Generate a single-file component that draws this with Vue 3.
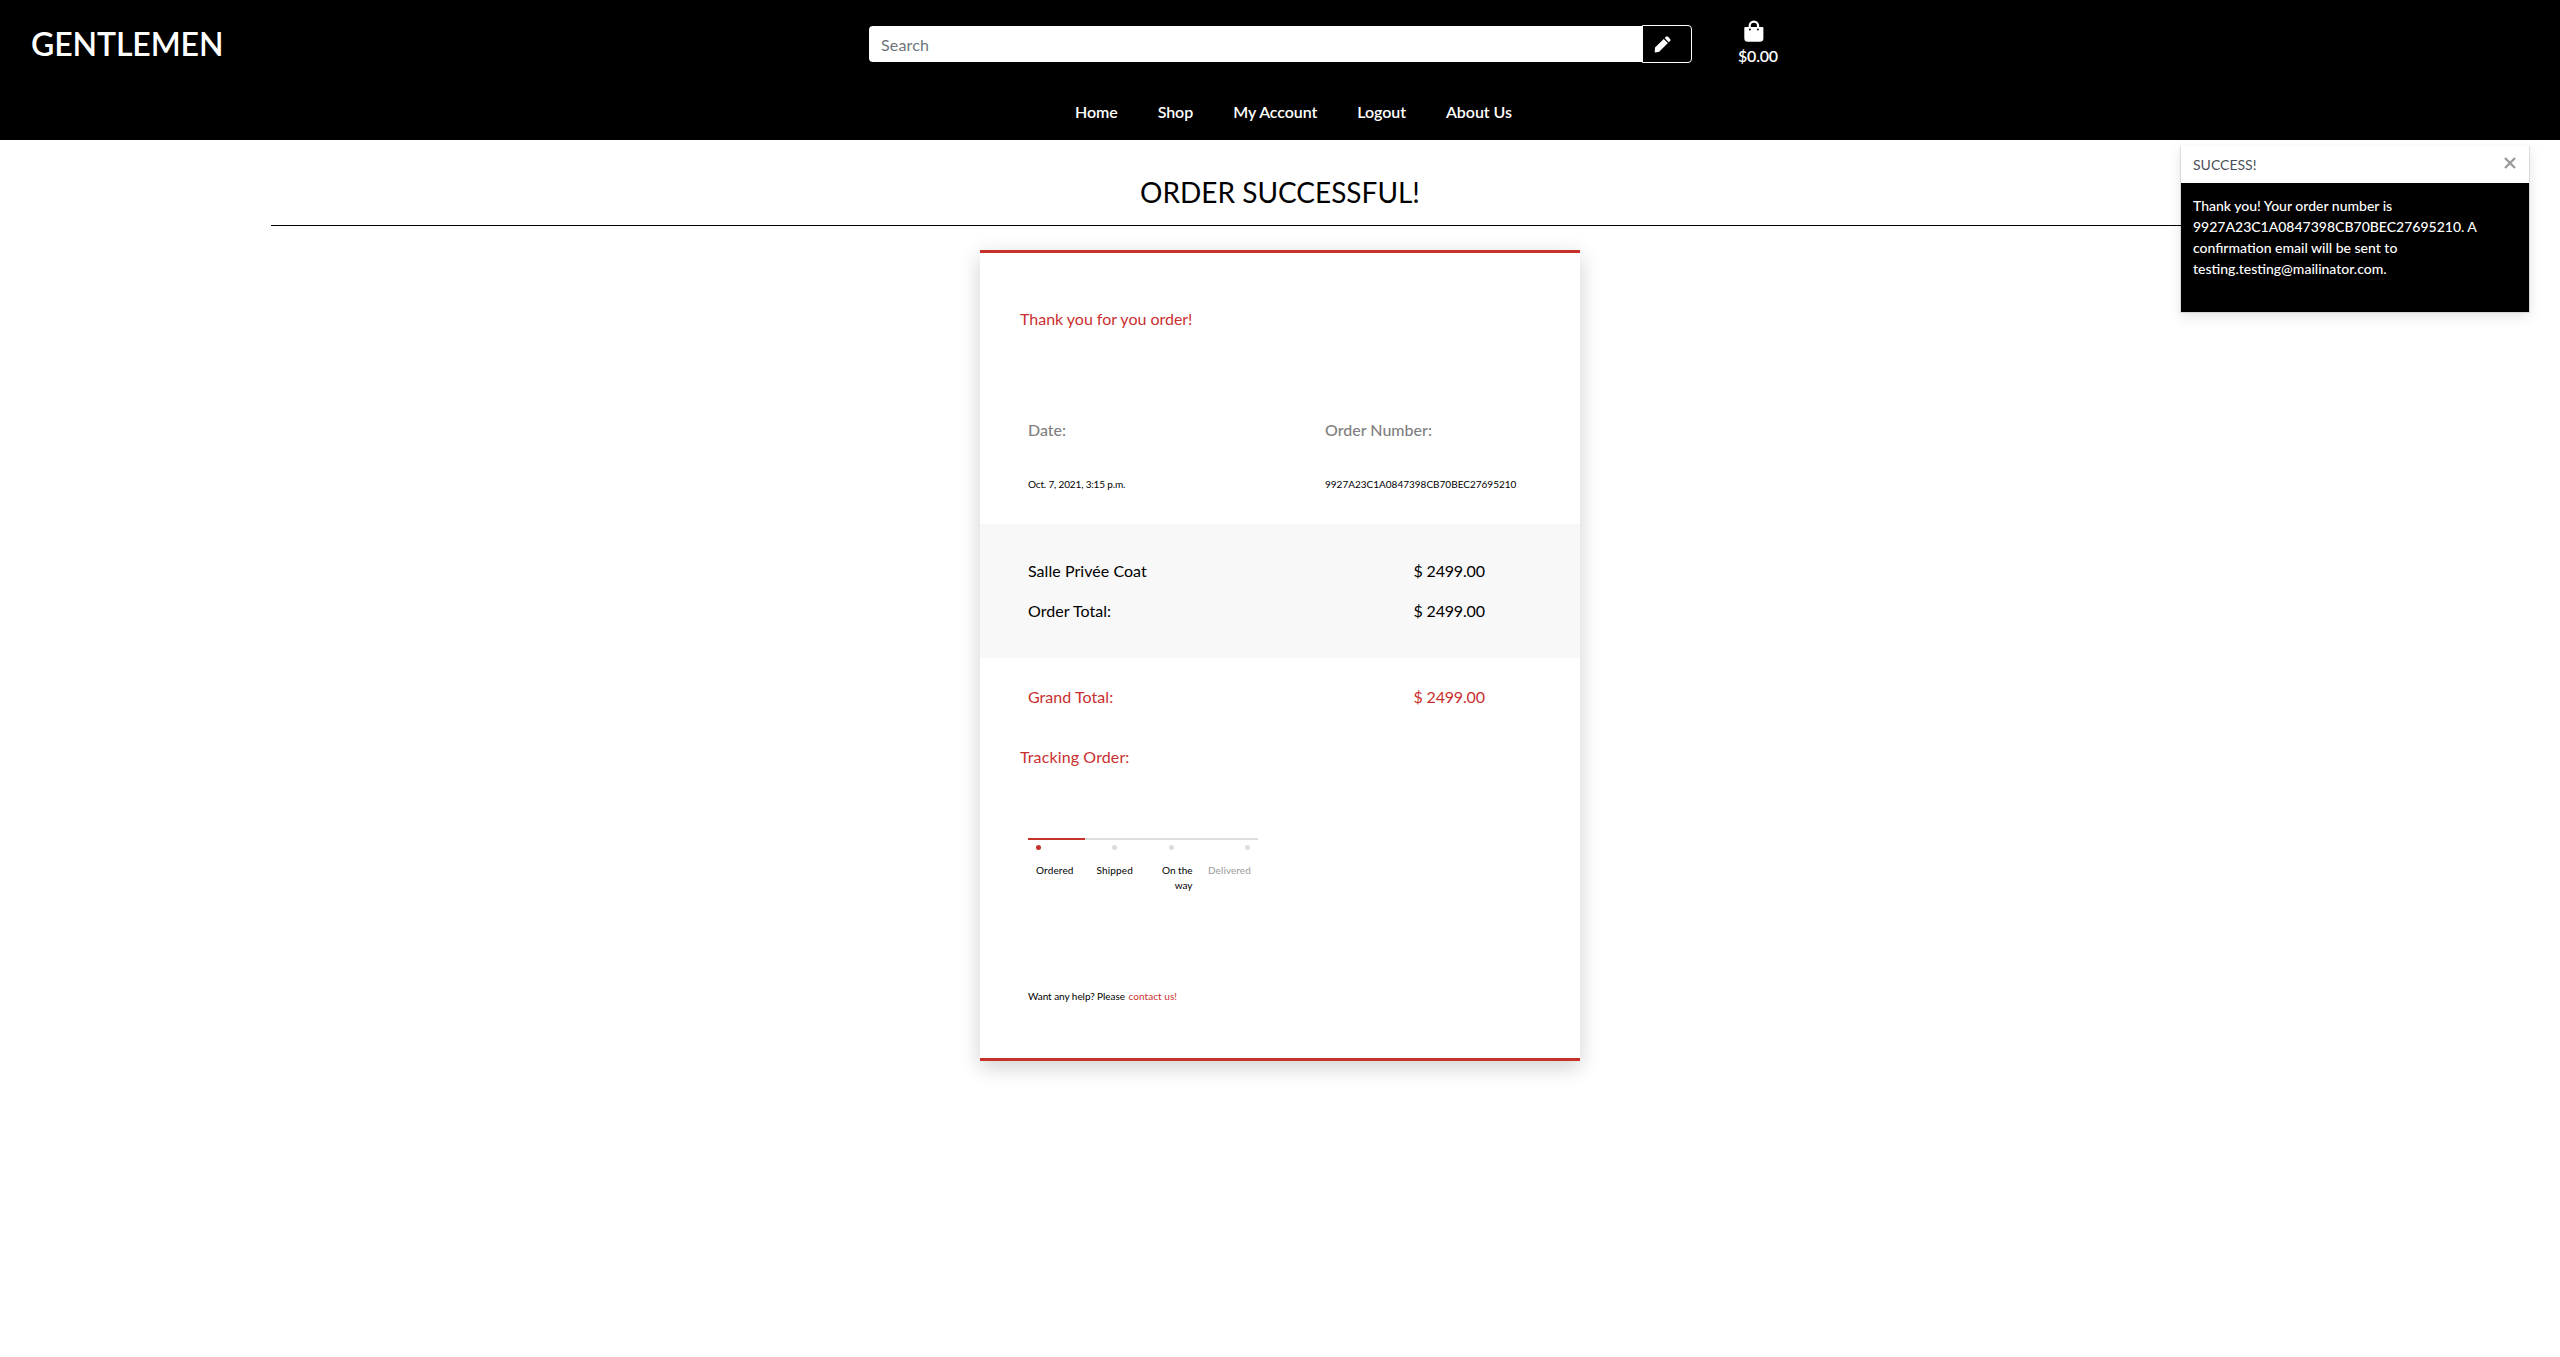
<script setup>
const links = ['Home', 'Shop', 'My Account', 'Logout', 'About Us']
const lines = [
  { name: 'Salle Privée Coat', price: '$ 2499.00' },
  { name: 'Order Total:', price: '$ 2499.00' },
]
const steps = [
  { key: 'ordered', label: 'Ordered', active: true },
  { key: 'shipped', label: 'Shipped', active: false },
  { key: 'way', label: 'On the way', active: false },
  { key: 'delivered', label: 'Delivered', active: false },
]
</script>

<template>
  <div class="page">
    <header class="header">
      <div class="top">
        <a class="logo">GENTLEMEN</a>
        <form class="search" @submit.prevent>
          <input type="text" placeholder="Search" aria-label="Search" />
          <button type="submit" aria-label="Submit search">
            <svg width="17" height="17" viewBox="0 0 17 17" fill="#fff">
              <path d="M1 11.6 9.7 2.9 13.9 7.1 5.2 15.8 1.4 16.5Q.6 16.5.7 15.7Z" />
              <path d="M10.6 2 12 .7Q13 0 14 .7L16.2 2.9Q17 3.9 16.2 4.9L14.8 6.2Z" />
            </svg>
          </button>
        </form>
        <a class="bag">
          <svg width="20" height="22" viewBox="0 0 20 22">
            <path d="M5.7 9V5.8a4.2 4.2 0 0 1 8.4 0V9" fill="none" stroke="#fff" stroke-width="2.2" />
            <path d="M1.3 7h17.1a1 1 0 0 1 1 1v10.3a3.5 3.5 0 0 1-3.5 3.5H3.8a3.5 3.5 0 0 1-3.5-3.5V8a1 1 0 0 1 1-1Z" fill="#fff" />
            <circle cx="5.9" cy="9.5" r="1" />
            <circle cx="13.9" cy="9.5" r="1" />
          </svg>
          <span>$0.00</span>
        </a>
      </div>
      <nav class="nav">
        <a v-for="link in links" :key="link">{{ link }}</a>
      </nav>
    </header>

    <main class="main">
      <h1>ORDER SUCCESSFUL!</h1>
      <hr />
      <section class="card">
        <h2 class="thanks">Thank you for you order!</h2>
        <div class="info">
          <div class="date">
            <p class="caption">Date:</p>
            <p class="small tight">Oct. 7, 2021, 3:15 p.m.</p>
          </div>
          <div>
            <p class="caption">Order Number:</p>
            <p class="small">9927A23C1A0847398CB70BEC27695210</p>
          </div>
        </div>
        <div class="pricing">
          <div v-for="line in lines" :key="line.name" class="row">
            <span>{{ line.name }}</span><span class="price">{{ line.price }}</span>
          </div>
        </div>
        <div class="row total">
          <span>Grand Total:</span><span class="price">$ 2499.00</span>
        </div>
        <h2 class="tracking">Tracking Order:</h2>
        <div class="progress">
          <div class="bar"><div class="done"></div></div>
          <div class="dots">
            <i v-for="s in steps" :key="s.key" :class="{ active: s.active }"></i>
          </div>
          <ul class="steps">
            <li v-for="s in steps" :key="s.key" :class="s.key">{{ s.label }}</li>
          </ul>
        </div>
        <p class="help">Want any help? Please <a>contact us!</a></p>
      </section>
    </main>

    <aside class="toast">
      <div class="toast-head">
        <span>SUCCESS!</span>
        <svg width="12" height="12" viewBox="0 0 12 12" stroke="#999" stroke-width="2.3">
          <path d="M1 1 11 11M11 1 1 11" />
        </svg>
      </div>
      <div class="toast-body">Thank you! Your order number is 9927A23C1A0847398CB70BEC27695210. A confirmation email will be sent to testing.testing@mailinator.com.</div>
    </aside>
  </div>
</template>

<style>
body {
  margin: 0;
  background: #fff;
}
</style>

<style scoped>
* {
  box-sizing: border-box;
}
.page {
  position: relative;
  min-height: 1357px;
  background: #fff;
  color: #000;
  font: 400 16px/24px Lato, sans-serif;
}
h1, h2, p, ul {
  margin: 0;
  padding: 0;
  font-weight: 400;
}
.header {
  height: 140px;
  background: #000;
  color: #fff;
  font-weight: 500;
}
.top {
  display: flex;
  align-items: flex-start;
  height: 100px;
  padding-left: 31px;
}
.logo {
  width: 838px;
  padding-top: 20px;
  font-size: 32px;
  font-weight: 600;
  line-height: 48px;
  letter-spacing: -0.1px;
}
.search {
  display: flex;
  align-items: center;
  width: 823px;
  height: 38px;
  margin-top: 25px;
}
.search input {
  width: 773px;
  height: 36px;
  padding: 1px 12px 0;
  border: 0;
  border-radius: 4px 0 0 4px;
  background: #fff;
  font: 400 16px/24px Lato, sans-serif;
  letter-spacing: 0.15px;
}
.search input::placeholder {
  color: #6c757d;
  opacity: 1;
}
.search button {
  display: flex;
  align-items: center;
  width: 50px;
  height: 38px;
  padding: 0 0 0 11px;
  border: 1px solid #fff;
  border-radius: 0 4px 4px 0;
  background: #000;
}
.bag {
  display: flex;
  flex-direction: column;
  margin: 20px 0 0 46px;
  font-weight: 600;
  letter-spacing: -0.2px;
}
.bag svg {
  margin-left: 6px;
}
.bag span {
  margin-top: 2px;
}
.nav {
  display: flex;
  gap: 40px;
  padding-left: 1075px;
  font-weight: 600;
  letter-spacing: -0.07px;
}
.main {
  display: flex;
  flex-direction: column;
  align-items: center;
  padding-top: 35px;
}
h1 {
  font-size: 28px;
  line-height: 34px;
}
hr {
  width: 2018px;
  height: 1px;
  margin: 16px 0 24px;
  border: 0;
  background: #000;
}
.card {
  width: 600px;
  height: 811px;
  border: solid #c43228;
  border-width: 3px 0;
  background: #fff;
  box-shadow: 0 6px 20px 0 rgba(0, 0, 0, 0.19);
}
h2 {
  padding-left: 40px;
  color: #c92f2f;
  font-size: 16px;
  line-height: 24px;
}
.thanks {
  margin-top: 54px;
  letter-spacing: -0.02px;
}
.info {
  display: flex;
  height: 193px;
  padding: 87px 0 0 48px;
}
.date {
  width: 297px;
}
.caption {
  color: gray;
  font-weight: 500;
}
.small {
  margin-top: 35px;
  font-size: 10px;
  line-height: 15px;
}
.tight {
  letter-spacing: -0.16px;
}
.pricing {
  display: flex;
  flex-direction: column;
  gap: 16px;
  height: 134px;
  padding-top: 35px;
  background: #f8f8f8;
}
.row {
  display: flex;
  padding-left: 48px;
  letter-spacing: 0.05px;
}
.row span:first-child {
  width: 385.5px;
}
.row .price {
  letter-spacing: -0.17px;
}
.total {
  margin-top: 27px;
  color: #c92f2f;
}
.tracking {
  margin-top: 36px;
  letter-spacing: 0.12px;
}
.progress {
  width: 230px;
  margin: 69px 0 0 48px;
}
.bar {
  height: 2px;
  background: #ddd;
}
.done {
  width: 57px;
  height: 2px;
  background: #c43228;
}
.dots {
  display: grid;
  grid-template-columns: 76px 57px 76px 5px;
  padding: 5px 0 0 8px;
}
.dots i {
  width: 5px;
  height: 5px;
  border-radius: 50%;
  background: #ddd;
}
.dots i.active {
  background: #c43228;
}
.steps {
  display: grid;
  grid-template-columns: 60.5px 60px 36px 60px;
  padding: 13px 0 0 8px;
  list-style: none;
  font-size: 10px;
  line-height: 15px;
  letter-spacing: 0.15px;
}
.steps .way {
  text-align: right;
  letter-spacing: 0;
}
.steps .delivered {
  padding-left: 15.5px;
  color: #9b9b9b;
  letter-spacing: 0.08px;
}
.help {
  margin: 96px 0 0 48px;
  font-size: 10px;
  line-height: 15px;
  letter-spacing: -0.05px;
}
.help a {
  margin-left: 1px;
  color: #c92f2f;
  letter-spacing: 0.05px;
}
.toast {
  position: absolute;
  top: 146px;
  left: 2180px;
  width: 350px;
  height: 167px;
  border: 1px solid rgba(0, 0, 0, 0.1);
  border-top: 0;
  background: #fff;
  background-clip: padding-box;
  box-shadow: 0 4px 12px rgba(0, 0, 0, 0.1);
}
.toast-head {
  display: flex;
  align-items: flex-start;
  justify-content: space-between;
  height: 37px;
  padding: 8px 13px 0 12px;
  color: #495057;
  font-size: 14px;
  line-height: 21px;
}
.toast-head svg {
  margin-top: 3px;
}
.toast-body {
  height: 129px;
  padding: 12px;
  background: #000;
  color: #fff;
  font-size: 14px;
  font-weight: 500;
  line-height: 21px;
}
</style>
